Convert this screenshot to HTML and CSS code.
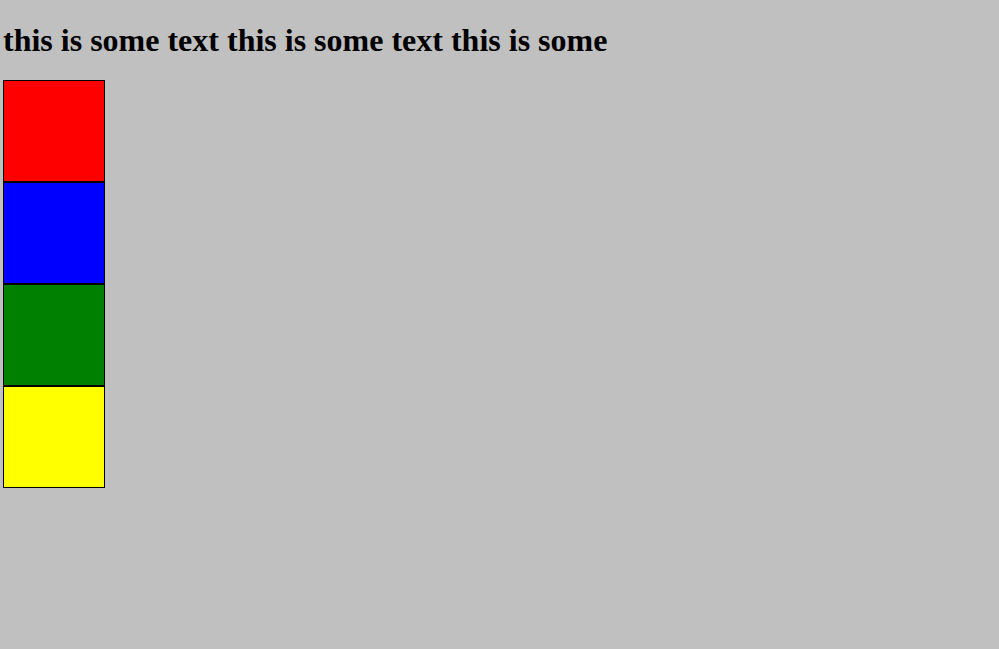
FILE: index.html
```html
<!DOCTYPE html>
<html>
<head>
<meta charset="utf-8">
<link rel="stylesheet" href="styles.css">
</head>
<body>
<h1 class="title">this is some text this is some text this is some</h1>
<div class="stack">
  <div class="box red"></div>
  <div class="box blue"></div>
  <div class="box green"></div>
  <div class="box yellow"></div>
</div>
</body>
</html>
```
FILE: styles.css
```css
html, body {
  margin: 0;
  background: #c0c0c0;
}
body {
  padding: 3px;
  font-family: "Liberation Serif", serif;
}
.title {
  font-size: 32px;
  font-weight: bold;
  margin: 19px 0 21px 0;
  line-height: 37px;
  white-space: nowrap;
}
.stack {
  display: flex;
  flex-direction: column;
}
.box {
  width: 100px;
  height: 100px;
  border: 1px solid #000;
}
.red { background: #ff0000; }
.blue { background: #0000ff; }
.green { background: #008000; }
.yellow { background: #ffff00; }
```
